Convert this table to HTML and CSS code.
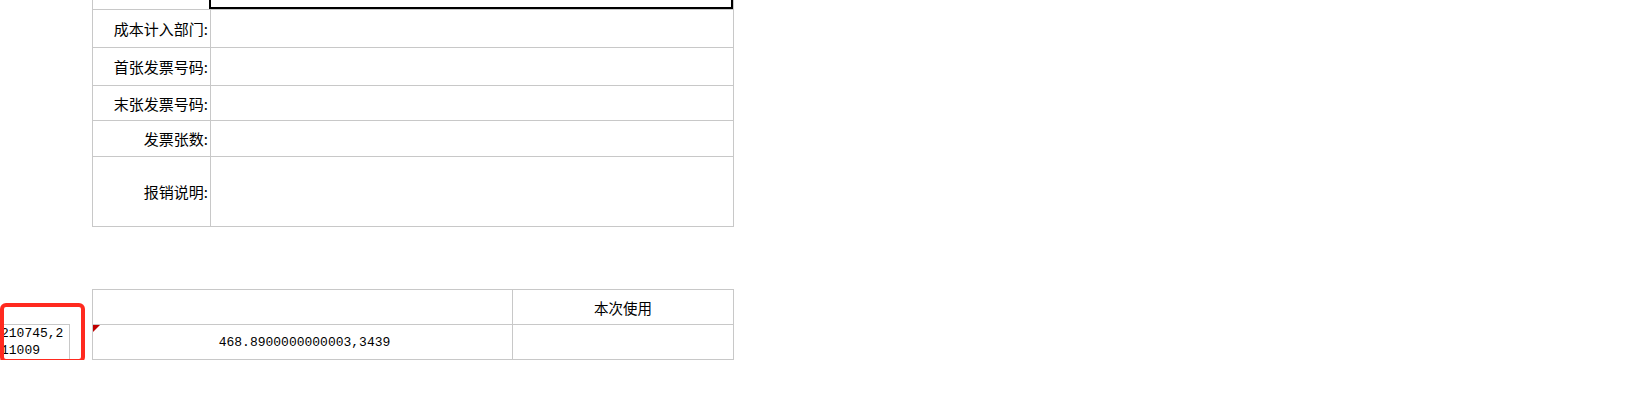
FILE: index.html
```html
<!DOCTYPE html>
<html lang="zh-CN">
<head>
<meta charset="utf-8">
<title>报销单</title>
<link rel="stylesheet" href="styles.css">
</head>
<body>
<div class="form">
  <div class="label"></div>
  <div class="value"><div class="focus"></div></div>
  <div class="label">成本计入部门:</div>
  <div class="value"></div>
  <div class="label">首张发票号码:</div>
  <div class="value"></div>
  <div class="label">末张发票号码:</div>
  <div class="value"></div>
  <div class="label">发票张数:</div>
  <div class="value"></div>
  <div class="label">报销说明:</div>
  <div class="value"></div>
</div>

<div class="section">
  <div class="side">210745,211009</div>
  <div class="grid2">
    <div class="cell"></div>
    <div class="cell head">本次使用</div>
    <div class="cell num"><span class="marker"></span>468.8900000000003,3439</div>
    <div class="cell"></div>
  </div>
  <div class="highlight"></div>
</div>
</body>
</html>
```

FILE: styles.css
```css
html, body {
  margin: 0;
  padding: 0;
  background: #fff;
}

body {
  font-family: "Noto Sans CJK SC", "Liberation Sans", sans-serif;
  color: #000;
  overflow: hidden;
}

.form {
  margin-top: -29px;
  margin-left: 92px;
  width: 642px;
  display: grid;
  grid-template-columns: 118px 523px;
  grid-template-rows: 38px 38px 38px 35px 36px 70px;
  border-top: 1px solid #c8c8c8;
  border-left: 1px solid #c8c8c8;
}

.label,
.value {
  box-sizing: border-box;
  border-right: 1px solid #c8c8c8;
  border-bottom: 1px solid #c8c8c8;
}

.label {
  display: flex;
  align-items: center;
  justify-content: flex-end;
  padding-right: 2px;
  font-size: 15px;
  white-space: nowrap;
}

.value {
  position: relative;
}

.focus {
  box-sizing: border-box;
  height: 100%;
  width: calc(100% + 2px);
  margin-left: -2px;
  border: 2px solid #000;
}

.section {
  position: relative;
  margin-top: 62px;
  display: flex;
  align-items: flex-start;
}

.side {
  box-sizing: border-box;
  margin-top: 35px;
  width: 70px;
  height: 36px;
  padding-left: 1px;
  border-top: 1px solid #c8c8c8;
  border-right: 1px solid #c8c8c8;
  border-bottom: 1px solid #c8c8c8;
  font-family: "Liberation Mono", "DejaVu Sans Mono", monospace;
  font-size: 13px;
  line-height: 17px;
  word-break: break-all;
}

.grid2 {
  margin-left: 22px;
  display: grid;
  grid-template-columns: 420px 221px;
  grid-template-rows: 35px 35px;
  border-top: 1px solid #c8c8c8;
  border-left: 1px solid #c8c8c8;
}

.cell {
  position: relative;
  box-sizing: border-box;
  border-right: 1px solid #c8c8c8;
  border-bottom: 1px solid #c8c8c8;
  display: flex;
  align-items: center;
  justify-content: center;
  white-space: nowrap;
}

.head {
  font-size: 14.5px;
}

.num {
  font-family: "Liberation Mono", "DejaVu Sans Mono", monospace;
  font-size: 13px;
  padding-left: 4px;
}

.marker {
  position: absolute;
  left: 0;
  top: 0;
  width: 0;
  height: 0;
  border-top: 7px solid #c00000;
  border-right: 7px solid transparent;
}

.highlight {
  position: absolute;
  left: 0;
  top: 14px;
  box-sizing: border-box;
  width: 85px;
  height: 60px;
  border: 4px solid #ff2a1f;
  border-radius: 6px;
}
```
